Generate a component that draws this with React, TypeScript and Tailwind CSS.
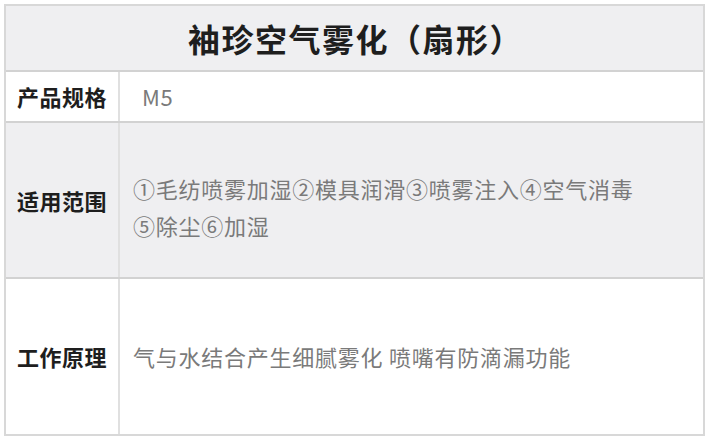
import React from 'react';

const ROWS = [
  { label: '产品规格', value: ['M5'], height: 'h-[51px]', bg: 'bg-white', pad: '' },
  {
    label: '适用范围',
    value: ['①毛纺喷雾加湿②模具润滑③喷雾注入④空气消毒', '⑤除尘⑥加湿'],
    height: 'h-[156px]',
    bg: 'bg-[#efeff1]',
    pad: 'pt-[14px]',
  },
  { label: '工作原理', value: ['气与水结合产生细腻雾化 喷嘴有防滴漏功能'], height: 'h-[155px]', bg: 'bg-white', pad: '' },
];

const App: React.FC = () => {
  return (
    <div className="w-[715px] h-[442px] bg-white pt-[4px] pl-[4px] font-['Noto_Sans_CJK_SC',sans-serif]">
      <div className="w-[701px] border-2 border-[#d8d8d8]">
        <div className="h-[66px] bg-[#efeff1] flex items-center justify-center border-b-2 border-[#d2d2d2]">
          <h1 className="text-[32px] font-bold text-[#1e1e1e] tracking-[1.5px] pl-[2px]">袖珍空气雾化（扇形）</h1>
        </div>

        {ROWS.map((row, i) => (
          <div
            key={row.label}
            className={`flex ${row.height} ${row.bg} ${i < ROWS.length - 1 ? 'border-b-2 border-[#d2d2d2]' : ''}`}
          >
            <div className="w-[114px] shrink-0 flex items-center justify-center border-r-2 border-[#e0e0e0]">
              <span className="text-[22px] font-bold text-[#1e1e1e] tracking-[0.5px]">{row.label}</span>
            </div>
            <div
              className={`flex-1 flex flex-col justify-center pl-[13px] ${row.pad} text-[22px] leading-[37px] tracking-[0.75px] text-[#7a7a7a]`}
            >
              {row.value.map((line) => (
                <div key={line} className={line === 'M5' ? 'pl-[9px]' : ''}>
                  {line}
                </div>
              ))}
            </div>
          </div>
        ))}
      </div>
    </div>
  );
};

export default App;
